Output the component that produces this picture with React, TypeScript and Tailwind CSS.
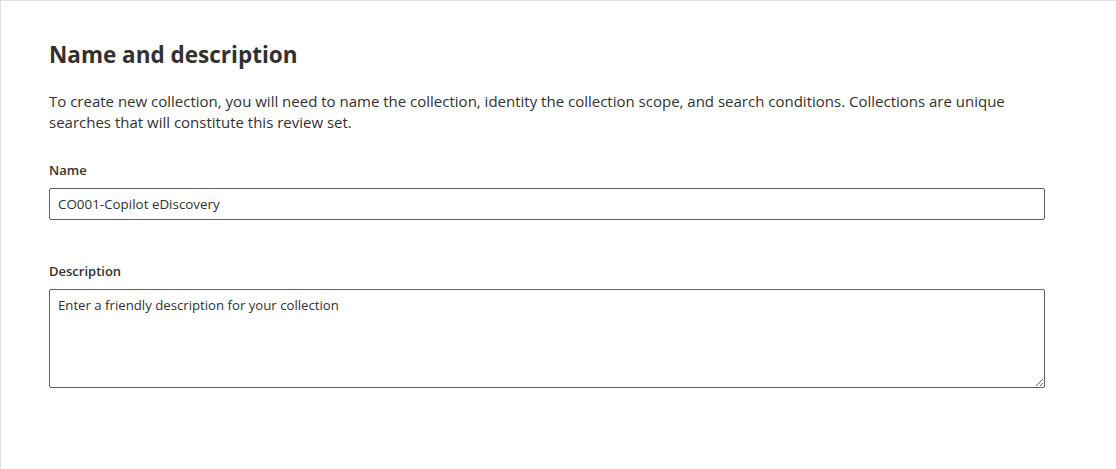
export default function App() {
  return (
    <div
      className="w-[1116px] h-[469px] bg-white border-t border-l border-[#e1dfdd] text-[#323130] overflow-hidden"
      style={{ fontFamily: '"Open Sans", "Noto Sans", sans-serif' }}
    >
      <div className="pl-12 pt-[38px] w-[1045px]">
        <h2 className="text-[22.5px] font-bold leading-[32px]">Name and description</h2>
        <p className="mt-[20px] text-[15px] leading-[21px] text-[#323130]">
          To create new collection, you will need to name the collection, identity the collection scope, and search conditions. Collections are unique searches that will constitute this review set.
        </p>

        <label className="block mt-[27px] text-[13px] font-semibold leading-[20px]">Name</label>
        <input
          className="mt-[8px] block w-[996px] h-[32px] px-[8px] border border-[#605e5c] rounded-[2px] text-[13.4px] text-[#323130] outline-none"
          defaultValue="CO001-Copilot eDiscovery"
        />

        <label className="block mt-[41px] text-[13px] font-semibold leading-[20px]">Description</label>
        <textarea
          className="mt-[8px] block w-[996px] h-[99px] px-[8px] py-[6px] border border-[#605e5c] rounded-[2px] text-[13.2px] leading-[19px] text-[#323130] placeholder:text-[#323130] outline-none resize"
          placeholder="Enter a friendly description for your collection"
        />
      </div>
    </div>
  );
}
